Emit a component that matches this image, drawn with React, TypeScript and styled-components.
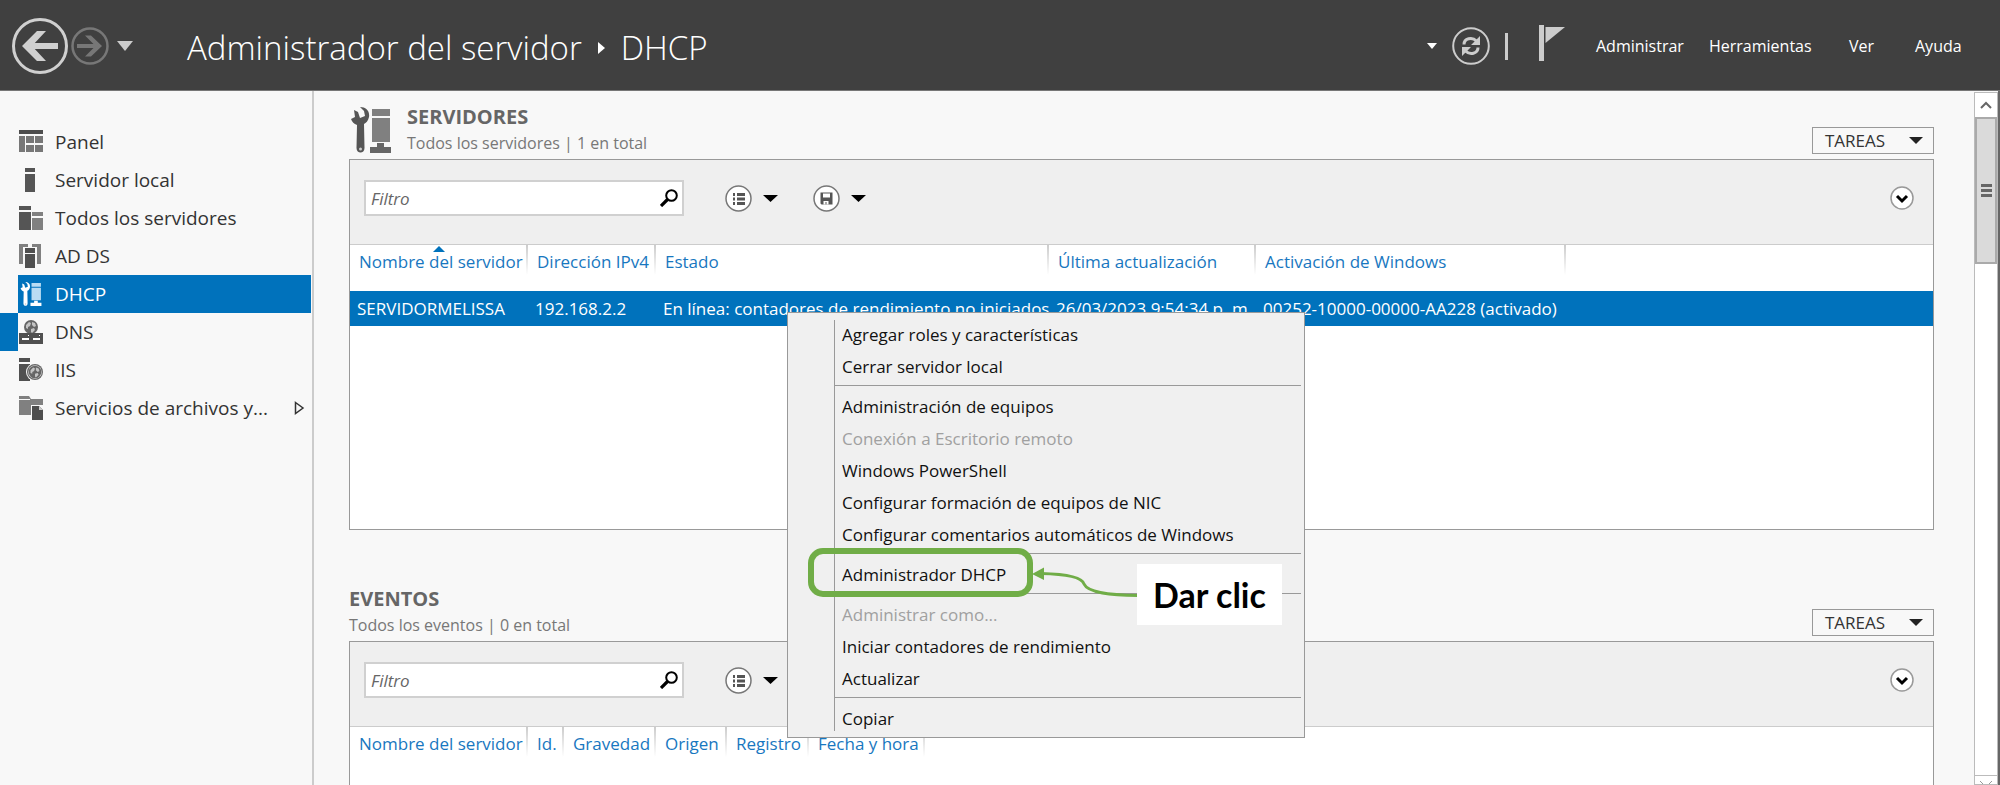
import React from "react";
import styled, { createGlobalStyle } from "styled-components";

const Global = createGlobalStyle`
  *, *::before, *::after { box-sizing: border-box; }
  html, body { margin: 0; padding: 0; height: 100%; overflow: hidden; }
  #root { height: 100%; }
  body, button, input { font-family: "Open Sans", "Noto Sans", sans-serif; }
  button { background: none; border: 0; padding: 0; margin: 0; color: inherit; font-size: inherit; }
  svg { display: block; flex: none; }
`;

const BLUE = "#0072bc";

const Page = styled.div`
  position: relative;
  display: flex;
  flex-direction: column;
  height: 100vh;
  overflow: hidden;
  background: #f8f8f8;
  color: #333;
`;

const Header = styled.header`
  display: flex;
  align-items: center;
  flex: none;
  height: 91px;
  padding: 2px 36px 0 12px;
  background: #404040;
  border-bottom: 1px solid #777;
  color: #fff;
`;

const NavButtons = styled.div`
  display: flex;
  align-items: center;
  gap: 3px;
  width: 175px;
`;

const Title = styled.h1`
  display: flex;
  align-items: center;
  gap: 16px;
  flex: 1;
  margin: 0;
  padding-top: 4px;
  font-size: 33px;
  line-height: 44px;
  font-weight: 300;
  white-space: nowrap;
`;

const Tools = styled.div`
  display: flex;
  align-items: center;
  gap: 15px;
  margin-right: 31px;
`;

const Divider = styled.span`
  width: 3px;
  height: 27px;
  background: #ccc;
`;

const FlagButton = styled.button`
  margin: 0 0 6px 16px;
`;

const MenuBar = styled.nav`
  display: flex;
  font-size: 16px;
  line-height: 24px;
`;

const MenuBarButton = styled.button<{ $w: number }>`
  width: ${(p) => p.$w}px;
  text-align: left;
  white-space: nowrap;
`;

const Body = styled.div`
  display: flex;
  flex: 1;
  min-height: 0;
  border-right: 2px solid #666;
`;

const Sidebar = styled.nav`
  flex: none;
  width: 314px;
  padding-top: 32px;
  border-right: 2px solid #ccc;
`;

const SideRow = styled.div<{ $marked?: boolean }>`
  padding-left: 18px;
  padding-right: 1px;
  background: linear-gradient(${(p) => (p.$marked ? BLUE : "transparent")} 0 0) left / 18px 100% no-repeat;
`;

const SideLink = styled.a<{ $active?: boolean }>`
  display: flex;
  align-items: center;
  gap: 12px;
  height: 38px;
  padding: 0 6px 0 1px;
  color: ${(p) => (p.$active ? "#fff" : "#333")};
  background: ${(p) => (p.$active ? BLUE : "transparent")};
  font-size: 19px;
  line-height: 24px;
  text-decoration: none;
  white-space: nowrap;
`;

const SideLabel = styled.span`
  flex: 1;
`;

const Main = styled.main`
  flex: 1;
  min-width: 0;
  overflow: hidden;
  padding: 13px 40px 0 35px;
`;

const Section = styled.section`
  display: flex;
  flex-direction: column;
`;

const SectionHead = styled.div<{ $flush?: boolean }>`
  display: flex;
  align-items: flex-end;
  gap: 16px;
  height: ${(p) => (p.$flush ? 111 : 55)}px;
  padding-bottom: 3px;
  padding-left: ${(p) => (p.$flush ? 0 : 2)}px;
`;

const HeadIcon = styled.div`
  padding-bottom: 3px;
`;

const Heading = styled.div`
  flex: 1;
`;

const SectionTitle = styled.h2`
  margin: 0;
  font-size: 20px;
  line-height: 26px;
  font-weight: 700;
  color: #666;
`;

const SubTitle = styled.p`
  margin: 0;
  font-size: 16px;
  line-height: 26px;
  color: #777;
`;

const TasksButton = styled.button`
  display: flex;
  align-items: center;
  justify-content: space-between;
  width: 122px;
  height: 27px;
  margin-bottom: 2px;
  padding: 0 10px 0 12px;
  border: 1px solid #999;
  color: #333;
  font-size: 17px;
  line-height: 24px;
`;

const Panel = styled.div<{ $h: number }>`
  min-height: ${(p) => p.$h}px;
  border: 1px solid #999;
  background: #fff;
`;

const Toolbar = styled.div`
  display: flex;
  align-items: center;
  height: 85px;
  padding: 0 19px 8px 14px;
  background: #efefef;
  border-bottom: 1px solid #ccc;
`;

const FilterBox = styled.label`
  display: flex;
  align-items: center;
  width: 320px;
  height: 36px;
  margin-right: 41px;
  padding: 0 4px 0 5px;
  border: 2px solid #d0d0d0;
  background: #fff;
`;

const FilterInput = styled.input`
  flex: 1;
  min-width: 0;
  padding: 0;
  border: 0;
  outline: 0;
  background: none;
  font-size: 17px;
  font-style: italic;
  &::placeholder { color: #666; opacity: 1; }
`;

const ToolButton = styled.button`
  display: flex;
  align-items: center;
  gap: 11px;
  margin-right: 35px;
`;

const ExpandButton = styled.button`
  margin-left: auto;
`;

const Grid = styled.table`
  width: 100%;
  table-layout: fixed;
  border-collapse: collapse;
  font-size: 17px;
  line-height: 24px;
  text-align: left;
  white-space: nowrap;
`;

const HeadCell = styled.th`
  position: relative;
  height: 46px;
  padding: 0 0 12px 9px;
  color: #1877c0;
  font-weight: 400;
  background: linear-gradient(#ccc, #fff) right top / 2px 30px no-repeat;
  &:last-child { background: none; }
`;

const SortMark = styled.svg`
  position: absolute;
  top: 1px;
  left: 83px;
`;

const Row = styled.tr`
  height: 35px;
  background: ${BLUE};
  color: #fff;
`;

const Cell = styled.td`
  padding: 0 0 0 7px;
  overflow: hidden;
`;

const ScrollBar = styled.div`
  display: flex;
  flex-direction: column;
  flex: none;
  width: 24px;
  margin-top: 1px;
  border: 1px solid #bbb;
  background: #fff;
`;

const ScrollButton = styled.button`
  display: flex;
  justify-content: center;
  align-items: center;
  flex: none;
  height: 24px;
`;

const Thumb = styled.div`
  display: flex;
  align-items: center;
  justify-content: center;
  height: 147px;
  border: 2px solid #aaa;
  background: #dadada;
`;

const Track = styled.div`
  flex: 1;
`;

const DownButton = styled(ScrollButton)`
  height: 9px;
  align-items: flex-end;
  overflow: hidden;
  border-top: 1px solid #bbb;
`;

const ContextMenu = styled.div`
  position: absolute;
  left: 787px;
  top: 312px;
  width: 518px;
  padding: 5px 3px 0 46px;
  border: 1px solid #999;
`;

const MenuSurface = styled(ContextMenu)`
  background: #f0f0f0;
`;

const MenuItems = styled.div`
  padding: 1px 0 2px 1px;
  background: linear-gradient(#999 0 0) left 2px / 1px calc(100% - 8px) no-repeat;
`;

const MenuItem = styled.button`
  display: block;
  width: 100%;
  height: 32px;
  padding-left: 7px;
  color: #111;
  font-size: 17px;
  line-height: 24px;
  text-align: left;
  white-space: nowrap;
  &:disabled { color: #a0a0a0; }
`;

const MenuLine = styled.hr`
  height: 8px;
  margin: 0;
  border: 0;
  background: linear-gradient(#999 0 0) center 2px / 100% 1px no-repeat;
`;

const Highlight = styled.div`
  position: absolute;
  left: 808px;
  top: 548px;
  width: 225px;
  height: 49px;
  border: 6px solid #70ad47;
  border-radius: 15px;
  pointer-events: none;
`;

const Arrow = styled.svg`
  position: absolute;
  left: 1031px;
  top: 564px;
`;

const Callout = styled.div`
  position: absolute;
  left: 1137px;
  top: 564px;
  width: 145px;
  height: 61px;
  background: #fff;
  color: #000;
  font-family: Lato, sans-serif;
  font-size: 34px;
  line-height: 61px;
  font-weight: 700;
  text-align: center;
  white-space: nowrap;
`;

const Down = ({ w = 14, h = 7, color = "#222" }: { w?: number; h?: number; color?: string }) => (
  <svg width={w} height={h} viewBox="0 0 14 7" preserveAspectRatio="none">
    <path d="M0 0H14L7 7Z" fill={color} />
  </svg>
);

const BackIcon = () => (
  <svg width="56" height="56" viewBox="0 0 56 56" fill="none" stroke="#d0d0d0">
    <circle cx="28" cy="28" r="26.5" strokeWidth="3" />
    <path d="M46 28H15" strokeWidth="6" />
    <path d="M25 13h9L20 28l14 15h-9L10 28z" fill="#d0d0d0" stroke="none" />
  </svg>
);

const ForwardIcon = () => (
  <svg width="38" height="38" viewBox="0 0 38 38" fill="none" stroke="#777">
    <circle cx="19" cy="19" r="17.5" strokeWidth="2.5" />
    <path d="M6 19H28" strokeWidth="4" />
    <path d="M20 8.500h-6L24.500 19 14 29.500h6L31 19z" fill="#777" stroke="none" />
  </svg>
);

const RefreshIcon = () => (
  <svg width="38" height="38" viewBox="0 0 38 38" fill="none" stroke="#ccc">
    <circle cx="19" cy="19" r="17.800" strokeWidth="2" />
    <path d="M12 17.500c0-6 8-8 12.500-3.500M26 20.500c0 6-8 8-12.500 3.500" strokeWidth="3" />
    <path d="M28 9v9h-9zM10 29v-9h9z" fill="#ccc" stroke="none" />
  </svg>
);

const FlagIcon = () => (
  <svg width="26" height="36" viewBox="0 0 26 36" fill="#ccc">
    <path d="M0 0h5v36H0zM6.500 2H26L6.500 18z" />
  </svg>
);

const WrenchServer = ({ size, tool, box, foot }: { size: [number, number]; tool: string; box: string; foot: string }) => (
  <svg width={size[0]} height={size[1]} viewBox="0 0 40 46">
    <path
      d="M9 0c6 0 10 4 9 10-1 4-3 6-5 7l.5 24c0 6-8 6-8 0L6 18c-3-1-5-3-6-6l4-2-1-7 4 2 2 6 5-2-1-5z"
      fill={tool}
    />
    <circle cx="9.500" cy="42" r="1.500" fill="#ccc" />
    <path d="M21 2h18v7H21zM21 11h18v24H21z" fill={box} />
    <path d="M26 36h7v4h7v6H19v-6h7z" fill={foot} />
  </svg>
);

const Globe = ({ cx, cy, r }: { cx: number; cy: number; r: number }) => (
  <g transform={`translate(${cx} ${cy}) scale(${r / 7})`}>
    <circle r="7" fill="#666" />
    <path d="M-5-2l3-3 2 1-1 3-2 1v2l-2-1zM1-5l3 1 1 3-2 1-2-2zM0 2l3-1 1 2-3 3-1-1z" fill="#c4c4c4" />
  </g>
);

const icons: Record<string, React.ReactNode> = {
  panel: (
    <>
      <path d="M0 0h24v4H0z" fill="#4d4d4d" />
      <path d="M0 6h6v16H0zM7 6h8v7H7zM16 6h8v7h-8zM7 15h8v7H7zM16 15h8v7h-8z" fill="#777" />
    </>
  ),
  local: <path d="M6 0h10v4H6zM6 6h10v18H6z" fill="#555" />,
  all: (
    <>
      <path d="M0 0h12v4H0zM0 6h12v18H0z" fill="#555" />
      <path d="M13 6h11v4H13zM13 12h11v12H13z" fill="#808080" />
    </>
  ),
  adds: (
    <>
      <path d="M0 0h9v3H4v17H0zM22 0h-9v3h5v17h4z" fill="#808080" />
      <path d="M5 3h12v21H5z" fill="#f8f8f8" />
      <path d="M6 4h10v5H6zM6 10h10v14H6z" fill="#505050" />
    </>
  ),
  dns: (
    <>
      <Globe cx={12} cy={7} r={7} />
      <path d="M0 13h24v11H0z" fill="#505050" />
      <path d="M3 18h7v2H3zM14 18h7v2h-7zM9 15h1v1H9zM20 15h1v1h-1z" fill="#fff" />
    </>
  ),
  iis: (
    <>
      <path d="M0 0h11v4H0zM0 6h11v17H0z" fill="#505050" />
      <circle cx="16" cy="14" r="9" fill="#f8f8f8" />
      <circle cx="16" cy="14" r="8" fill="#666" />
      <circle cx="16" cy="14" r="6.800" fill="#ddd" />
      <Globe cx={16} cy={14} r={6.3} />
    </>
  ),
  files: (
    <>
      <path d="M0 0h10l2 3h12v16H0z" fill="#808080" />
      <path d="M0 3.500h11" stroke="#f8f8f8" />
      <path d="M12 9h12v15H12z" fill="#f8f8f8" />
      <path d="M13 10h7l4 4v10H13z" fill="#4d4d4d" />
      <path d="M20 10v4h4z" fill="#ccc" />
    </>
  ),
};

const SideIcon = ({ name }: { name: string }) =>
  name === "dhcp" ? (
    <WrenchServer size={[24, 24]} tool="#fff" box="#b9dcf3" foot="#fff" />
  ) : (
    <svg width="24" height="24" viewBox="0 0 24 24">
      {icons[name]}
    </svg>
  );

const SearchIcon = () => (
  <svg width="18" height="18" viewBox="0 0 18 18" fill="none" stroke="#000">
    <circle cx="11.500" cy="6.500" r="5.300" strokeWidth="2" />
    <path d="M7.500 10.500L1 17" strokeWidth="3.200" />
  </svg>
);

const ListIcon = () => (
  <svg width="27" height="27" viewBox="0 0 27 27">
    <circle cx="13.500" cy="13.500" r="12.500" fill="#fff" stroke="#777" strokeWidth="1.500" />
    <path d="M8 8h2v3H8zM12 8h8v3h-8zM8 12.500h2v3H8zM12 12.500h8v3h-8zM8 17h2v3H8zM12 17h8v3h-8z" fill="#555" />
  </svg>
);

const SaveIcon = () => (
  <svg width="27" height="27" viewBox="0 0 27 27">
    <circle cx="13.500" cy="13.500" r="12.500" fill="#fff" stroke="#777" strokeWidth="1.500" />
    <path d="M7.500 7.500h12v12h-11l-1-1z" fill="#555" />
    <path d="M10 8.500h7v4h-7zM10.500 16h5v3.500h-2V17h-1v2.500h-2z" fill="#fff" />
  </svg>
);

const ExpandIcon = () => (
  <svg width="24" height="24" viewBox="0 0 24 24" fill="none">
    <circle cx="12" cy="12" r="11" fill="#fff" stroke="#999" strokeWidth="1.500" />
    <path d="M7 10l5 5 5-5" stroke="#000" strokeWidth="3" />
  </svg>
);

const sideItems = [
  ["panel", "Panel"],
  ["local", "Servidor local"],
  ["all", "Todos los servidores"],
  ["adds", "AD DS"],
  ["dhcp", "DHCP"],
  ["dns", "DNS"],
  ["iis", "IIS"],
  ["files", "Servicios de archivos y..."],
];

const menuItems: (string | null)[] = [
  "Agregar roles y características",
  "Cerrar servidor local",
  null,
  "Administración de equipos",
  "Conexión a Escritorio remoto",
  "Windows PowerShell",
  "Configurar formación de equipos de NIC",
  "Configurar comentarios automáticos de Windows",
  null,
  "Administrador DHCP",
  null,
  "Administrar como...",
  "Iniciar contadores de rendimiento",
  "Actualizar",
  null,
  "Copiar",
];
const disabledItems = ["Conexión a Escritorio remoto", "Administrar como..."];

type Column = { label: string; width?: number };

const serverColumns: Column[] = [
  { label: "Nombre del servidor", width: 178 },
  { label: "Dirección IPv4", width: 128 },
  { label: "Estado", width: 393 },
  { label: "Última actualización", width: 207 },
  { label: "Activación de Windows", width: 310 },
  { label: "" },
];
const serverRow = [
  "SERVIDORMELISSA",
  "192.168.2.2",
  "En línea: contadores de rendimiento no iniciados",
  "26/03/2023 9:54:34 p. m.",
  "00252-10000-00000-AA228 (activado)",
  "",
];
const eventColumns: Column[] = [
  { label: "Nombre del servidor", width: 178 },
  { label: "Id.", width: 36 },
  { label: "Gravedad", width: 92 },
  { label: "Origen", width: 71 },
  { label: "Registro", width: 82 },
  { label: "Fecha y hora", width: 116 },
  { label: "" },
];

type ListPanelProps = { columns: Column[]; row?: string[]; sorted?: boolean; height: number };

const ListPanel = ({ columns, row, sorted, height }: ListPanelProps) => (
  <Panel $h={height}>
    <Toolbar>
      <FilterBox>
        <FilterInput type="text" placeholder="Filtro" aria-label="Filtro" />
        <SearchIcon />
      </FilterBox>
      <ToolButton aria-label="Criterios">
        <ListIcon />
        <Down w={15} color="#000" />
      </ToolButton>
      <ToolButton aria-label="Guardar consulta">
        <SaveIcon />
        <Down w={15} color="#000" />
      </ToolButton>
      <ExpandButton aria-label="Expandir">
        <ExpandIcon />
      </ExpandButton>
    </Toolbar>
    <Grid>
      <colgroup>
        {columns.map((c) => (
          <col key={c.label} width={c.width} />
        ))}
      </colgroup>
      <thead>
        <tr>
          {columns.map((c, i) => (
            <HeadCell key={c.label} scope="col">
              {sorted && i === 0 && (
                <SortMark width="12" height="6" viewBox="0 0 12 6">
                  <path d="M0 6L6 0L12 6Z" fill={BLUE} />
                </SortMark>
              )}
              {c.label}
            </HeadCell>
          ))}
        </tr>
      </thead>
      {row && (
        <tbody>
          <Row>
            {row.map((v, i) => (
              <Cell key={i}>{v}</Cell>
            ))}
          </Row>
        </tbody>
      )}
    </Grid>
  </Panel>
);

const Tasks = () => (
  <TasksButton>
    TAREAS
    <Down />
  </TasksButton>
);

export default function App() {
  return (
    <Page>
      <Global />
      <Header>
        <NavButtons>
          <button aria-label="Atrás"><BackIcon /></button>
          <button aria-label="Adelante"><ForwardIcon /></button>
          <button aria-label="Historial">
            <svg width="23" height="10" viewBox="0 0 23 10"><path d="M5 0h16l-8 10z" fill="#ccc" /></svg>
          </button>
        </NavButtons>
        <Title>
          Administrador del servidor
          <svg width="7" height="12" viewBox="0 0 7 12"><path d="M0 0l7 6-7 6z" fill="#fff" /></svg>
          DHCP
        </Title>
        <Tools>
          <button aria-label="Notificaciones"><Down w={10} h={6} color="#fff" /></button>
          <button aria-label="Actualizar panel"><RefreshIcon /></button>
          <Divider />
          <FlagButton aria-label="Tareas"><FlagIcon /></FlagButton>
        </Tools>
        <MenuBar>
          <MenuBarButton $w={113}>Administrar</MenuBarButton>
          <MenuBarButton $w={140}>Herramientas</MenuBarButton>
          <MenuBarButton $w={66}>Ver</MenuBarButton>
          <MenuBarButton $w={49}>Ayuda</MenuBarButton>
        </MenuBar>
      </Header>
      <Body>
        <Sidebar>
          {sideItems.map(([icon, label]) => (
            <SideRow key={icon} $marked={icon === "dns"}>
              <SideLink href="#" $active={icon === "dhcp"}>
                <SideIcon name={icon} />
                <SideLabel>{label}</SideLabel>
                {icon === "files" && (
                  <svg width="11" height="14" viewBox="0 0 11 14">
                    <path d="M1.500 1.500L9 7l-7.500 5.500z" fill="none" stroke="#333" strokeWidth="1.500" />
                  </svg>
                )}
              </SideLink>
            </SideRow>
          ))}
        </Sidebar>
        <Main>
          <Section>
            <SectionHead>
              <HeadIcon>
                <WrenchServer size={[40, 46]} tool="#555" box="#808080" foot="#666" />
              </HeadIcon>
              <Heading>
                <SectionTitle>SERVIDORES</SectionTitle>
                <SubTitle>Todos los servidores | 1 en total</SubTitle>
              </Heading>
              <Tasks />
            </SectionHead>
            <ListPanel columns={serverColumns} row={serverRow} sorted height={371} />
          </Section>
          <Section>
            <SectionHead $flush>
              <Heading>
                <SectionTitle>EVENTOS</SectionTitle>
                <SubTitle>Todos los eventos | 0 en total</SubTitle>
              </Heading>
              <Tasks />
            </SectionHead>
            <ListPanel columns={eventColumns} height={371} />
          </Section>
        </Main>
        <ScrollBar>
          <ScrollButton aria-label="Subir">
            <svg width="12" height="8" viewBox="0 0 12 8"><path d="M1 7l5-5 5 5" fill="none" stroke="#666" strokeWidth="2" /></svg>
          </ScrollButton>
          <Thumb>
            <svg width="11" height="13" viewBox="0 0 11 13"><path d="M0 0h11v3H0zM0 5h11v3H0zM0 10h11v3H0z" fill="#666" /></svg>
          </Thumb>
          <Track />
          <DownButton aria-label="Bajar">
            <svg width="12" height="3" viewBox="0 0 12 3"><path d="M0 0l4 4M12 0L8 4" fill="none" stroke="#999" /></svg>
          </DownButton>
        </ScrollBar>
      </Body>
      <MenuSurface role="menu">
        <MenuItems>
          {menuItems.map((m, i) =>
            m === null ? (
              <MenuLine key={i} />
            ) : (
              <MenuItem key={i} role="menuitem" disabled={disabledItems.includes(m)}>
                {m}
              </MenuItem>
            )
          )}
        </MenuItems>
      </MenuSurface>
      <Highlight />
      <Arrow width="107" height="36" viewBox="0 0 107 36">
        <path d="M10 9.500C30 10 51 12 53 20C57 29 80 31 107 31.500" fill="none" stroke="#70ad47" strokeWidth="3" />
        <path d="M1 10L13 3.500V16z" fill="#70ad47" />
      </Arrow>
      <Callout>Dar clic</Callout>
    </Page>
  );
}
